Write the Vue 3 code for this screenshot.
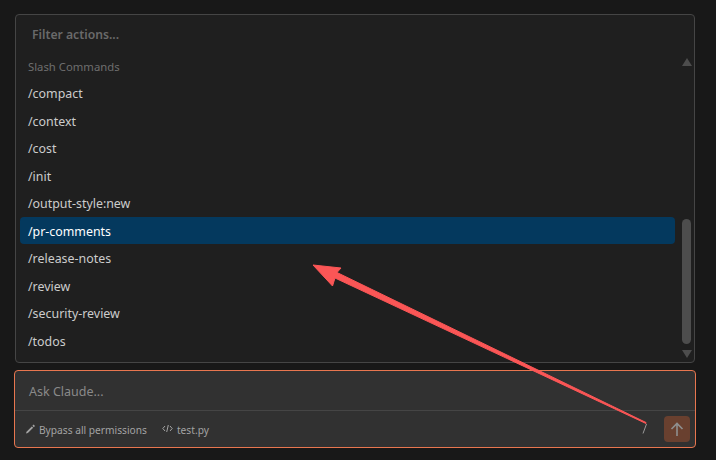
<script setup>
const commands = ['/compact', '/context', '/cost', '/init', '/output-style:new', '/pr-comments', '/release-notes', '/review', '/security-review', '/todos']
</script>

<template>
  <div class="page">
    <section class="panel">
      <div class="filter">Filter actions...</div>
      <div class="body">
        <div class="list">
          <div class="heading">Slash Commands</div>
          <div v-for="c in commands" :key="c" class="row" :class="{ active: c === '/pr-comments' }">{{ c }}</div>
        </div>
        <div class="scroll">
          <span class="tri up"></span>
          <span class="track"><span class="thumb"></span></span>
          <span class="tri down"></span>
        </div>
      </div>
    </section>
    <section class="composer">
      <div class="ask">Ask Claude...</div>
      <div class="footer">
        <svg class="ico pen" width="12" height="12" viewBox="0 0 12 12"><path d="M1 10.6 1.5 8.7 6.8 3.4 8.2 4.8 2.9 10.1Z M7.4 2.8 8.6 1.6 10 3 8.8 4.2Z" fill="#a3a3a3"/></svg>
        <span class="lbl">Bypass all permissions</span>
        <svg class="ico code" width="11" height="10" viewBox="0 0 11 10" fill="none" stroke="#a3a3a3" stroke-width="1"><path d="M3 2 .8 4.5 3 7M8 2 10.2 4.5 8 7M6.3 1 4.7 8"/></svg>
        <span class="lbl">test.py</span>
        <span class="send">
          <svg width="16" height="16" viewBox="0 0 16 16" fill="none" stroke="#8f8f8f" stroke-width="1.6"><path d="M8 15V2.5M2.5 8 8 2.5 13.5 8"/></svg>
        </span>
      </div>
    </section>
    <svg class="arrow" width="716" height="460" viewBox="0 0 716 460">
      <path d="M646 423.5 335 278 332.5 286 313 265 341 268 337 272.5 646 422.5Z" fill="#fb5656" stroke="#fb5656" stroke-width="1"/>
      <path d="M646.5 424 643 433.5" stroke="#9a9a9a" stroke-width="1" fill="none"/>
    </svg>
  </div>
</template>

<style>
html, body { margin: 0; background: #181818; }
</style>

<style scoped>
.page {
  position: relative;
  width: 716px;
  height: 460px;
  box-sizing: border-box;
  padding: 14px 20px 0 14px;
  background: #181818;
  overflow: hidden;
  font-family: "Noto Sans", "Open Sans", sans-serif;
}
.panel {
  margin-left: 1px;
  width: 680px;
  height: 349px;
  box-sizing: border-box;
  border: 1px solid #454545;
  border-radius: 4px;
  background: #1f1f1f;
  display: flex;
  flex-direction: column;
}
.filter {
  height: 38px;
  line-height: 40px;
  padding-left: 16px;
  font-size: 12.2px;
  font-weight: 600;
  color: #6a6a6a;
}
.body { flex: 1; display: flex; min-height: 0; }
.list { flex: 1; padding: 0 4px; min-width: 0; }
.heading {
  height: 27px;
  line-height: 28px;
  padding-left: 8px;
  font-size: 11.3px;
  color: #6e6e6e;
}
.row {
  height: 27.5px;
  line-height: 27.5px;
  padding-left: 8px;
  font-size: 12.4px;
  color: #cccccc;
  border-radius: 4px;
}
.row.active {
  height: 27px;
  line-height: 29.5px;
  margin-top: -0.5px;
  margin-bottom: 1px;
  background: #04395e;
  color: #ffffff;
}
.scroll {
  width: 15px;
  display: flex;
  flex-direction: column;
  align-items: center;
  padding-top: 5px;
  box-sizing: border-box;
}
.tri { width: 0; height: 0; border-left: 5px solid transparent; border-right: 5px solid transparent; }
.tri.up { border-bottom: 8px solid #4d4d4d; }
.tri.down { border-top: 8px solid #4d4d4d; }
.track { height: 284px; display: flex; flex-direction: column; justify-content: flex-end; }
.thumb { width: 9px; height: 125px; background: #4d4d4d; border-radius: 5px; margin-bottom: 6px; }
.composer {
  margin-top: 7px;
  width: 682px;
  height: 78px;
  box-sizing: border-box;
  border: 1px solid #e8764f;
  border-radius: 4px;
  background: #313131;
}
.ask {
  height: 39px;
  line-height: 41px;
  padding-left: 14px;
  font-size: 12.5px;
  color: #8a8a8a;
  border-bottom: 1px solid #454545;
}
.footer {
  display: flex;
  align-items: center;
  height: 36px;
  padding: 0 5px 0 10px;
}
.ico { flex: none; }
.ico.pen { margin-right: 2px; }
.ico.code { margin-left: 15px; margin-right: 4px; }
.lbl { font-size: 10.2px; line-height: 16px; padding-top: 1px; color: #a3a3a3; }
.send {
  margin-left: auto;
  width: 26px;
  height: 26px;
  border-radius: 4px;
  background: #69402f;
  display: flex;
  align-items: center;
  justify-content: center;
}
.arrow { position: absolute; left: 0; top: 0; pointer-events: none; }
</style>
